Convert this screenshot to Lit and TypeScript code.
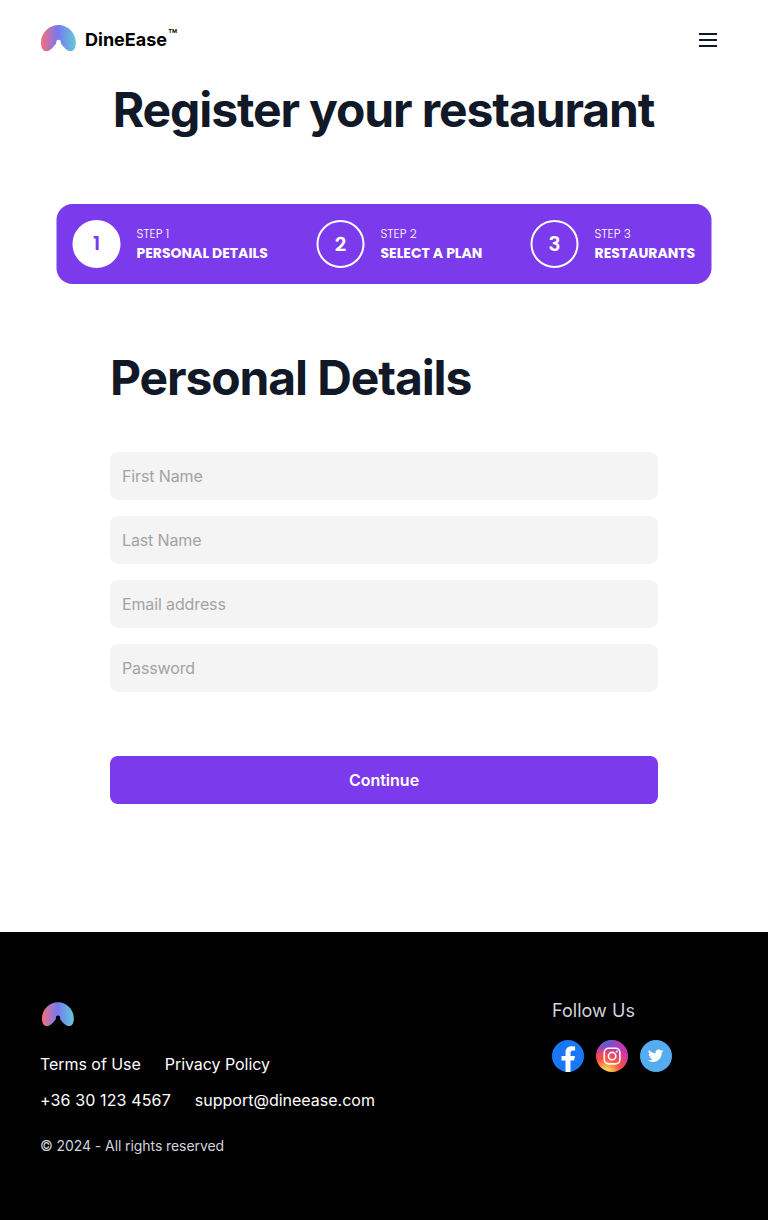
import { LitElement, html, css, svg } from "lit";
import { customElement, property } from "lit/decorators.js";

const arch = (id: string) => svg`
  <defs><linearGradient id=${id} x1="0" y1="0" x2="1" y2="0">
    <stop offset="0" stop-color="#f76e7c"/><stop offset=".48" stop-color="#7679ee"/><stop offset="1" stop-color="#62cbd9"/>
  </linearGradient></defs>
  <path fill="url(#${id})" d="M17.500 0C27 0 34.800 8 34.800 17.500c0 5-1.600 8.700-5.200 8.700-3.800 0-6.800-4-9.800-7.600V17a2.300 2.300 0 0 0-4.600 0v1.600c-3 3.600-6 7.600-9.800 7.600C1.600 26.200 0 22.500 0 17.500 0 8 8 0 17.500 0Z"/>`;

@customElement("app-header")
class AppHeader extends LitElement {
  static styles = css`
    :host { display: flex; justify-content: space-between; height: 80px; padding: 0 48px 0 41px; box-sizing: border-box; }
    .brand { display: flex; padding-top: 25px; }
    .mark { width: 35px; height: 27px; display: block; }
    .name { font-size: 18px; font-weight: 700; line-height: 28px; margin: 1px 0 0 9px; color: #000; }
    .tm { font-size: 15px; font-weight: 500; line-height: 15px; margin: 2px 0 0 1px; color: #000; }
    .menu { width: 24px; height: 24px; margin-top: 28px; color: #111827; }
  `;
  render() {
    return html`
      <div class="brand">
        <svg class="mark" viewBox="0 0 35 27">${arch("header-mark")}</svg>
        <span class="name">DineEase</span><span class="tm">™</span>
      </div>
      <svg class="menu" viewBox="0 0 24 24" fill="none" stroke="currentColor" stroke-width="2"><path d="M3 6h18M3 12h18M3 18h18"/></svg>`;
  }
}

@customElement("step-item")
class StepItem extends LitElement {
  @property({ type: Number }) number = 1;
  @property() label = "";
  @property({ type: Boolean, reflect: true }) active = false;
  static styles = css`
    :host { display: flex; gap: 16px; align-items: center; color: #fff; font-family: Poppins, Inter, sans-serif; }
    .circle { box-sizing: border-box; width: 48px; height: 48px; border: 2px solid #fff; border-radius: 50%; display: flex; align-items: center; justify-content: center; font-size: 20px; font-weight: 600; }
    :host([active]) .circle { background: #fff; color: #7c3aed; padding-bottom: 2px; }
    .text { white-space: nowrap; }
    .step { font-size: 12px; font-weight: 300; line-height: 18px; }
    .label { font-size: 14px; font-weight: 700; line-height: 20px; }
  `;
  render() {
    return html`<div class="circle">${this.number}</div>
      <div class="text"><div class="step">STEP ${this.number}</div><div class="label">${this.label}</div></div>`;
  }
}

@customElement("app-footer")
class AppFooter extends LitElement {
  static styles = css`
    :host { display: flex; justify-content: space-between; box-sizing: border-box; height: 288px; padding: 64px 96px 0 40px; background: #000; color: #fff; }
    .mark { display: block; width: 32px; height: 25px; margin: 6px 0 0 2px; }
    .row { display: flex; gap: 24px; font-size: 16px; line-height: 24px; margin-top: 12px; }
    .first { margin-top: 25px; letter-spacing: -0.05px; }
    .phone { letter-spacing: 0.130px; }
    .copy { font-size: 14px; line-height: 20px; margin-top: 24px; color: #d1d5db; letter-spacing: -0.08px; }
    .title { font-size: 18px; font-weight: 400; line-height: 28px; margin-top: 1px; color: #d1d5db; letter-spacing: 0.04px; }
    .social { width: 120px; }
    .icons { display: flex; gap: 12px; margin-top: 15px; }
    .icon { width: 32px; height: 32px; display: block; flex: none; }
  `;
  render() {
    return html`
      <div>
        <svg class="mark" viewBox="0 0 35 27">${arch("footer-mark")}</svg>
        <div class="row first"><span>Terms of Use</span><span>Privacy Policy</span></div>
        <div class="row"><span class="phone">+36 30 123 4567</span><span>support@dineease.com</span></div>
        <div class="copy">© 2024 - All rights reserved</div>
      </div>
      <div class="social">
        <div class="title">Follow Us</div>
        <div class="icons">
          <svg class="icon" viewBox="0 0 32 32"><circle cx="16" cy="16" r="16" fill="#1877f2"/><path fill="#fff" d="M22.200 20.600l.7-4.600h-4.400v-3c0-1.300.6-2.500 2.600-2.500h2V6.600s-1.800-.3-3.600-.3c-3.600 0-6 2.200-6 6.200V16h-4v4.600h4v11.200a16 16 0 0 0 5 0V20.600z"/></svg>
          <svg class="icon" viewBox="0 0 32 32">
            <defs>
              <radialGradient id="ig-warm" cx="0" cy="0" r="1" gradientUnits="userSpaceOnUse" gradientTransform="translate(10 33) rotate(-55) scale(28)"><stop stop-color="#ffdd55"/><stop offset=".18" stop-color="#ffc657"/><stop offset=".5" stop-color="#ff543e"/><stop offset="1" stop-color="#c837ab"/></radialGradient>
              <radialGradient id="ig-cool" cx="0" cy="0" r="1" gradientUnits="userSpaceOnUse" gradientTransform="translate(3 -1) rotate(15) scale(28 13)"><stop stop-color="#3771c8"/><stop offset=".3" stop-color="#4c66d0"/><stop offset="1" stop-color="#9633d8" stop-opacity="0"/></radialGradient>
            </defs>
            <circle cx="16" cy="16" r="16" fill="url(#ig-warm)"/><circle cx="16" cy="16" r="16" fill="url(#ig-cool)"/>
            <g fill="none" stroke="#fff" stroke-width="1.600"><rect x="8.300" y="8.300" width="15.600" height="15.600" rx="4.300"/><circle cx="16.100" cy="16.100" r="3.700"/></g><circle cx="20.800" cy="11.500" r="1" fill="#fff"/>
          </svg>
          <svg class="icon" viewBox="0 0 32 32"><circle cx="16" cy="16" r="16" fill="#55acee"/><path fill="#fff" transform="translate(7.950 8.050) scale(.64)" d="M23.950 4.570a10 10 0 0 1-2.820.77 4.960 4.960 0 0 0 2.160-2.720c-.95.560-2 .96-3.120 1.190a4.920 4.920 0 0 0-8.380 4.480C7.690 8.090 4.070 6.130 1.640 3.160a4.820 4.820 0 0 0-.67 2.480c0 1.710.87 3.210 2.190 4.100a4.900 4.900 0 0 1-2.230-.62v.06a4.920 4.920 0 0 0 3.950 4.830 5 5 0 0 1-2.210.080 4.940 4.940 0 0 0 4.600 3.420A9.870 9.870 0 0 1 0 19.540a14 14 0 0 0 7.550 2.210c9.050 0 14-7.500 14-13.980 0-.21 0-.42-.020-.63a9.940 9.940 0 0 0 2.460-2.550z"/></svg>
        </div>
      </div>`;
  }
}

@customElement("app-root")
class AppRoot extends LitElement {
  static styles = css`
    :host { display: block; min-height: 1220px; background: #fff; font-family: Inter, sans-serif; color: #111827; }
    .heading { margin: 0; font-size: 48px; line-height: 48px; font-weight: 700; letter-spacing: -1.120px; }
    .center { text-align: center; padding: 6px 1px 0 0; }
    .steps { display: grid; grid-template-columns: 196px 166px 165px; gap: 48px; box-sizing: border-box; width: 655px; height: 80px; padding: 16px; margin: 70px 0 0 57px; transform: translateX(-0.5px); background: #7c3aed; border-radius: 16px; }
    .form { width: 548px; margin: 0 auto; padding: 70px 0 128px; }
    .fields { display: grid; gap: 16px; margin-top: 50px; }
    .field { box-sizing: border-box; width: 100%; height: 48px; padding: 0 12px; border: 0; border-radius: 8px; background: #f4f4f4; font: 400 16px/24px Inter, sans-serif; letter-spacing: -0.130px; }
    .field::placeholder { color: #a3a3a3; opacity: 1; }
    .submit { display: block; width: 100%; height: 48px; margin-top: 64px; border: 0; border-radius: 8px; background: #7c3aed; color: #fff; font: 600 16px/24px Inter, sans-serif; }
  `;
  render() {
    return html`
      <app-header></app-header>
      <h1 class="heading center">Register your restaurant</h1>
      <div class="steps">
        <step-item active .number=${1} label="PERSONAL DETAILS"></step-item>
        <step-item .number=${2} label="SELECT A PLAN"></step-item>
        <step-item .number=${3} label="RESTAURANTS"></step-item>
      </div>
      <div class="form">
        <h2 class="heading">Personal Details</h2>
        <div class="fields">
          ${["First Name", "Last Name", "Email address", "Password"].map((p) => html`<input class="field" placeholder=${p} />`)}
        </div>
        <button class="submit">Continue</button>
      </div>
      <app-footer></app-footer>`;
  }
}
